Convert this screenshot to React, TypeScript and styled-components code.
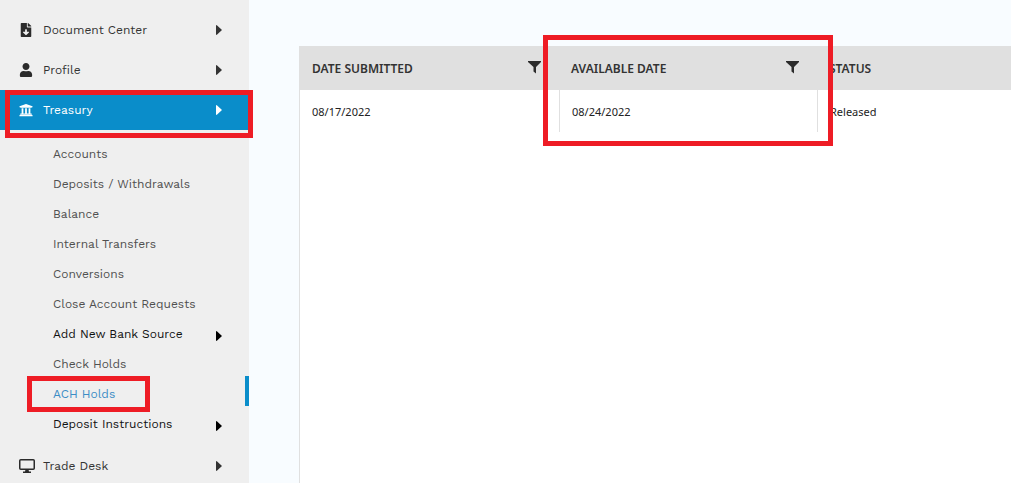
import React from "react";
import styled, { createGlobalStyle } from "styled-components";
import { FaFileDownload, FaUser, FaUniversity } from "react-icons/fa";

const GlobalStyle = createGlobalStyle`
  *, *::before, *::after { box-sizing: border-box; }
  body {
    margin: 0;
    background: #f8fcff;
    font-family: "Work Sans", Inter, "Liberation Sans", sans-serif;
    color: #333;
  }
  button { font: inherit; color: inherit; border: 0; background: none; padding: 0; cursor: pointer; }
`;

const Shell = styled.div`
  display: flex;
  height: 100vh;
  overflow: hidden;
`;

const Sidebar = styled.nav`
  flex: 0 0 249px;
  padding-top: 10px;
  background: #efefef;
  font-size: 12px;
`;

const MenuList = styled.ul`
  list-style: none;
  margin: 0;
  padding: 0;
`;

const SubList = styled(MenuList)`
  padding: 6px 0 10px;
`;

const MenuItem = styled.li`
  position: relative;
`;

const MenuButton = styled.button<{ $active?: boolean }>`
  display: flex;
  align-items: center;
  width: 100%;
  height: 40px;
  padding: 0 27px 0 17px;
  text-align: left;
  background: ${(p) => (p.$active ? "#0a8dca" : "transparent")};
  color: ${(p) => (p.$active ? "#fff" : "#333")};
`;

const IconSlot = styled.span<{ $active?: boolean }>`
  display: flex;
  justify-content: center;
  width: 18px;
  margin-right: 8px;
  color: ${(p) => (p.$active ? "#fff" : "#2b2b2b")};
`;

const Label = styled.span`
  flex: 1;
  white-space: nowrap;
`;

const SubLink = styled.a<{ $current?: boolean; $parent?: boolean }>`
  display: flex;
  align-items: center;
  height: 30px;
  padding: 6px 27px 0 53px;
  text-decoration: none;
  color: ${(p) => (p.$current ? "#3c8dc5" : p.$parent ? "#111" : "#505050")};
  ${(p) => p.$current && "border-right: 4px solid #0a8dca;"}
`;

const SubCaret = styled.span`
  display: flex;
  padding-top: 4px;
  color: #000;
`;

const Highlight = styled.span`
  position: absolute;
  z-index: 2;
  border: 5px solid #ee1c25;
  pointer-events: none;
`;

const MenuHighlight = styled(Highlight)`
  inset: 0 -4px -8px 5px;
`;

const LinkHighlight = styled(Highlight)`
  top: 0;
  left: 27px;
  width: 123px;
  height: 36px;
`;

const ColumnHighlight = styled(Highlight)`
  inset: -11px -16px -56px -16px;
`;

const Main = styled.main`
  flex: 1;
  min-width: 0;
  display: flex;
  padding: 46px 0 0 50px;
`;

const Panel = styled.section`
  flex: 1;
  min-width: 0;
  background: #fff;
  border-left: 1px solid #e0e0e0;
`;

const Table = styled.table`
  width: 100%;
  table-layout: fixed;
  border-collapse: separate;
  border-spacing: 0;
  font-family: "Segoe UI", "Noto Sans", "Open Sans", sans-serif;
`;

const DateColumn = styled.col<{ $width: number }>`
  width: ${(p) => p.$width}px;
`;

const HeadCell = styled.th`
  position: relative;
  height: 44px;
  padding: 0 18px 0 12px;
  background: #e0e0e0;
  color: #333;
  font-size: 12px;
  font-weight: 600;
  text-align: left;
  white-space: nowrap;
`;

const HeadContent = styled.div`
  display: flex;
  align-items: center;
  justify-content: space-between;
`;

const FilterButton = styled.button`
  display: flex;
  color: #2b2b2b;
`;

const Cell = styled.td`
  height: 42px;
  padding: 0 12px;
  font-size: 11px;
  color: #222;
  & + & {
    border-left: 1px solid #e0e0e0;
  }
`;

const Caret = () => (
  <svg width="6" height="10" viewBox="0 0 6 10" aria-hidden="true">
    <path d="M0 0.4 L0.6 0 L6 5 L0.6 10 L0 9.6Z" fill="currentColor" />
  </svg>
);

const Funnel = () => (
  <svg width="13" height="14" viewBox="0 0 13 14" aria-hidden="true">
    <path d="M0 0H13V1L8 6V12.5L5.5 10.5V6L0 1Z" fill="currentColor" />
  </svg>
);

const Monitor = () => (
  <svg width="18" height="14" viewBox="0 0 18 14" aria-hidden="true">
    <rect x="2.75" y="0.75" width="14.5" height="9.5" rx="1" fill="none" stroke="currentColor" strokeWidth="1.5" />
    <path d="M8.5 10.5H11.5L12 12.5H14V14H6V12.5H8Z" fill="currentColor" />
  </svg>
);

const treasuryLinks = [
  { label: "Accounts" },
  { label: "Deposits / Withdrawals" },
  { label: "Balance" },
  { label: "Internal Transfers" },
  { label: "Conversions" },
  { label: "Close Account Requests" },
  { label: "Add New Bank Source", parent: true },
  { label: "Check Holds" },
  { label: "ACH Holds", current: true },
  { label: "Deposit Instructions", parent: true },
];

interface EntryProps {
  icon: React.ReactNode;
  label: string;
  active?: boolean;
}

const MenuEntry = ({ icon, label, active }: EntryProps) => (
  <MenuButton type="button" $active={active} aria-expanded={!!active}>
    <IconSlot $active={active}>{icon}</IconSlot>
    <Label>{label}</Label>
    <Caret />
  </MenuButton>
);

export default function App() {
  return (
    <>
      <GlobalStyle />
      <Shell>
        <Sidebar aria-label="Main">
          <MenuList>
            <MenuItem>
              <MenuEntry icon={<FaFileDownload size={14} />} label="Document Center" />
            </MenuItem>
            <MenuItem>
              <MenuEntry icon={<FaUser size={14} />} label="Profile" />
            </MenuItem>
            <MenuItem>
              <MenuItem as="div">
                <MenuEntry icon={<FaUniversity size={14} />} label="Treasury" active />
                <MenuHighlight />
              </MenuItem>
              <SubList>
                {treasuryLinks.map((link) => (
                  <MenuItem key={link.label}>
                    <SubLink
                      href="#"
                      $current={link.current}
                      $parent={link.parent}
                      aria-current={link.current ? "page" : undefined}
                    >
                      <Label>{link.label}</Label>
                      {link.parent && (
                        <SubCaret>
                          <Caret />
                        </SubCaret>
                      )}
                    </SubLink>
                    {link.current && <LinkHighlight />}
                  </MenuItem>
                ))}
              </SubList>
            </MenuItem>
            <MenuItem>
              <MenuEntry icon={<Monitor />} label="Trade Desk" />
            </MenuItem>
          </MenuList>
        </Sidebar>
        <Main>
          <Panel>
            <Table>
              <colgroup>
                <DateColumn $width={259} />
                <DateColumn $width={258} />
                <col />
              </colgroup>
              <thead>
                <tr>
                  <HeadCell scope="col">
                    <HeadContent>
                      DATE SUBMITTED
                      <FilterButton type="button" aria-label="Filter by date submitted">
                        <Funnel />
                      </FilterButton>
                    </HeadContent>
                  </HeadCell>
                  <HeadCell scope="col">
                    <HeadContent>
                      AVAILABLE DATE
                      <FilterButton type="button" aria-label="Filter by available date">
                        <Funnel />
                      </FilterButton>
                    </HeadContent>
                    <ColumnHighlight />
                  </HeadCell>
                  <HeadCell scope="col">STATUS</HeadCell>
                </tr>
              </thead>
              <tbody>
                <tr>
                  <Cell>08/17/2022</Cell>
                  <Cell>08/24/2022</Cell>
                  <Cell>Released</Cell>
                </tr>
              </tbody>
            </Table>
          </Panel>
        </Main>
      </Shell>
    </>
  );
}
